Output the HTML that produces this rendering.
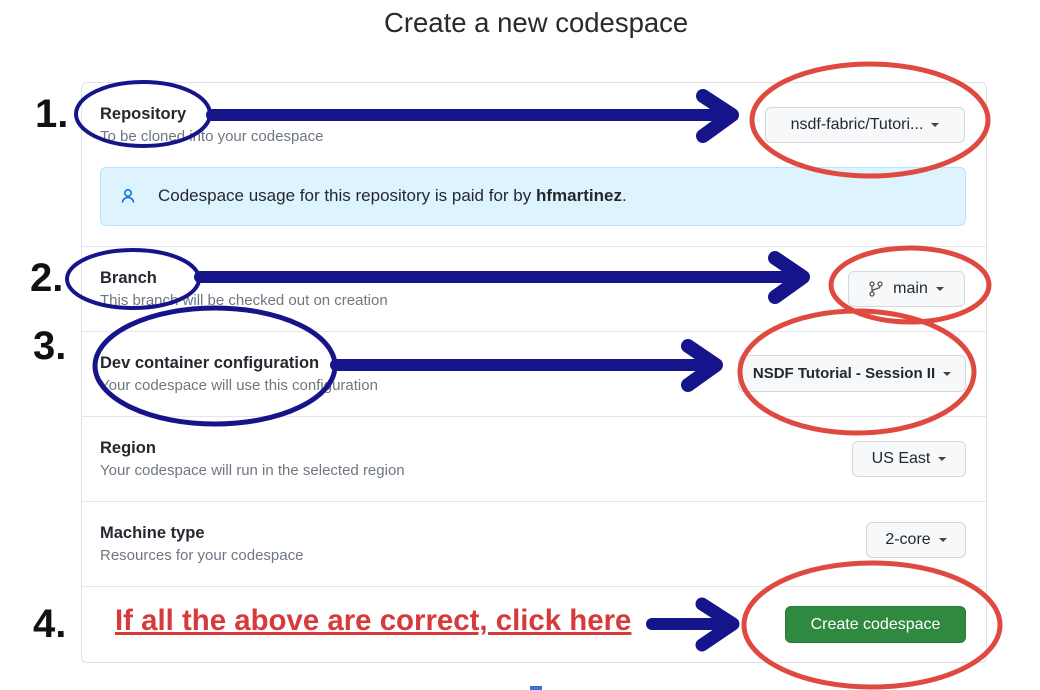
<!DOCTYPE html>
<html><head><meta charset="utf-8">
<style>
*{margin:0;padding:0;box-sizing:border-box}
body{width:1040px;height:690px;background:#fff;position:relative;overflow:hidden;font-family:"Liberation Sans",sans-serif;color:#1f2328}
.a{position:absolute;white-space:nowrap}
.title{left:384px;top:7px;font-size:27.5px;color:#2a2a2a}
.card{left:81px;top:82px;width:906px;height:581px;border:1px solid #dfe2e5;border-radius:6px}
.hr{left:82px;width:904px;height:1px;background:#e4e7ea}
.lbl{font-size:16.5px;font-weight:bold;color:#24292f}
.sub{font-size:15px;color:#6e7781}
.btn{border:1px solid #d4d8dc;border-radius:6px;background:#f6f8fa;font-size:16px;color:#24292f;display:flex;align-items:center;justify-content:center}
.car{display:inline-block;width:0;height:0;border-left:4px solid transparent;border-right:4px solid transparent;border-top:4px solid #444;margin-left:8px}
.num{font-size:40px;font-weight:bold;color:#111}
</style></head><body>
<div class="a title">Create a new codespace</div>
<div class="a card"></div>
<div class="a hr" style="top:246px"></div>
<div class="a hr" style="top:331px"></div>
<div class="a hr" style="top:416px"></div>
<div class="a hr" style="top:501px"></div>
<div class="a hr" style="top:586px"></div>

<div class="a lbl" style="left:100px;top:105px">Repository</div>
<div class="a sub" style="left:100px;top:128px">To be cloned into your codespace</div>
<div class="a btn" style="left:765px;top:107px;width:200px;height:36px">nsdf-fabric/Tutori...<span class="car"></span></div>

<div class="a" style="left:100px;top:167px;width:866px;height:59px;background:#ddf4ff;border:1px solid #b6e3ff;border-radius:6px"></div>
<svg class="a" style="left:120px;top:188px" width="16" height="16" viewBox="0 0 16 16"><circle cx="8" cy="5" r="3.2" fill="none" stroke="#0969da" stroke-width="1.5"/><path d="M2.5 14.5c0-3 2.5-5 5.5-5s5.5 2 5.5 5" fill="none" stroke="#0969da" stroke-width="1.5"/></svg>
<div class="a" style="left:158px;top:186px;font-size:17px;color:#24292f">Codespace usage for this repository is paid for by <b>hfmartinez</b>.</div>

<div class="a lbl" style="left:100px;top:269px">Branch</div>
<div class="a sub" style="left:100px;top:292px">This branch will be checked out on creation</div>
<div class="a btn" style="left:848px;top:271px;width:117px;height:36px"><svg width="14" height="16" viewBox="0 0 14 16" style="margin-right:10px"><circle cx="3" cy="3" r="2" fill="none" stroke="#555" stroke-width="1.3"/><circle cx="3" cy="13" r="2" fill="none" stroke="#555" stroke-width="1.3"/><circle cx="11" cy="3" r="2" fill="none" stroke="#555" stroke-width="1.3"/><path d="M3 5v6M11 5c0 4-8 2-8 6" fill="none" stroke="#555" stroke-width="1.3"/></svg>main<span class="car"></span></div>

<div class="a lbl" style="left:100px;top:354px">Dev container configuration</div>
<div class="a sub" style="left:100px;top:377px">Your codespace will use this configuration</div>
<div class="a btn" style="left:738px;top:355px;width:228px;height:37px;font-weight:bold;font-size:15px">NSDF Tutorial - Session II<span class="car"></span></div>

<div class="a lbl" style="left:100px;top:439px">Region</div>
<div class="a sub" style="left:100px;top:462px">Your codespace will run in the selected region</div>
<div class="a btn" style="left:852px;top:441px;width:114px;height:36px">US East<span class="car"></span></div>

<div class="a lbl" style="left:100px;top:524px">Machine type</div>
<div class="a sub" style="left:100px;top:547px">Resources for your codespace</div>
<div class="a btn" style="left:866px;top:522px;width:100px;height:36px">2-core<span class="car"></span></div>

<div class="a" style="left:785px;top:606px;width:181px;height:37px;background:#2f8a40;border:1px solid #287a37;border-radius:6px;color:#fff;font-size:16px;display:flex;align-items:center;justify-content:center">Create codespace</div>

<div class="a" style="left:115px;top:604px;font-size:30px;font-weight:bold;color:#d63a3a;text-decoration:underline;transform-origin:0 0;transform:scaleX(0.98)">If all the above are correct, click here</div>

<div class="a num" style="left:35px;top:92px">1.</div>
<div class="a num" style="left:30px;top:256px">2.</div>
<div class="a num" style="left:33px;top:324px">3.</div>
<div class="a num" style="left:33px;top:602px">4.</div>

<svg class="a" style="left:0;top:0" width="1040" height="690">
<g fill="none" stroke="#16148a" stroke-width="4">
<ellipse cx="143" cy="114" rx="67" ry="32"/>
<ellipse cx="133" cy="279" rx="66" ry="29"/>
<ellipse cx="215" cy="366" rx="120" ry="58" stroke-width="5"/>
</g>
<g fill="none" stroke="#16148a" stroke-linecap="round" stroke-linejoin="round">
<path d="M212 115H725" stroke-width="12"/><path d="M703 96L732 115L703 136" stroke-width="14"/>
<path d="M200 277H795" stroke-width="12"/><path d="M775 258L803 277L775 297" stroke-width="14"/>
<path d="M336 365H710" stroke-width="12"/><path d="M688 346L716 365L688 385" stroke-width="14"/>
<path d="M652 624H725" stroke-width="12"/><path d="M702 604L733 624L702 645" stroke-width="13"/>
</g>
<g fill="none" stroke="#de4a40" stroke-width="5">
<ellipse cx="870" cy="120" rx="118" ry="56"/>
<ellipse cx="910" cy="285" rx="79" ry="37"/>
<ellipse cx="857" cy="372" rx="117" ry="61"/>
<ellipse cx="872" cy="625" rx="128" ry="62"/>
</g>
<rect x="530" y="686" width="12" height="4" fill="#3a6fd8"/>
</svg>
</body></html>
